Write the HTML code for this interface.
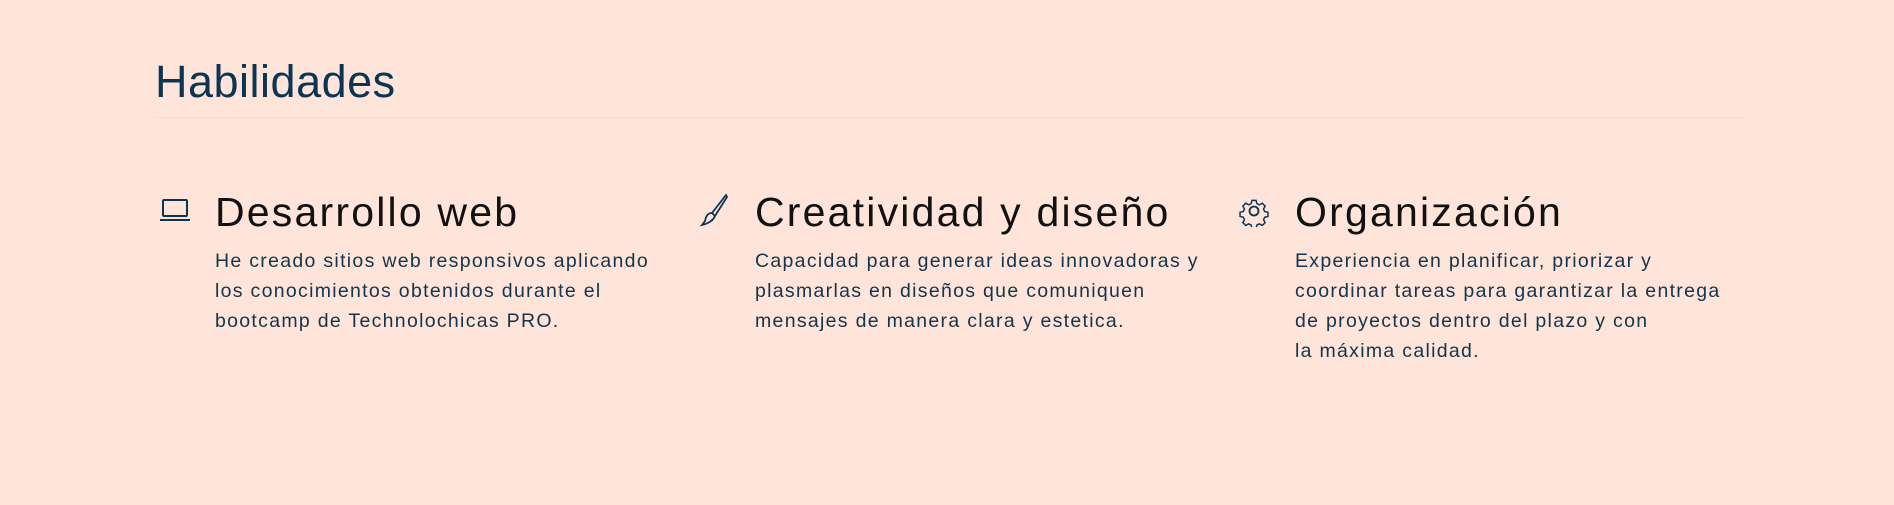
<!DOCTYPE html>
<html><head><meta charset="utf-8"><style>
body{margin:0;width:1894px;height:505px;background:#ffe4d9;font-family:"Liberation Sans",sans-serif;position:relative;overflow:hidden}
h2{position:absolute;left:155px;top:56px;margin:0;font-weight:400;font-size:45px;color:#0b3552;letter-spacing:0.5px}
.line{position:absolute;left:155px;top:117px;width:1590px;height:1px;background:#f2dcd4}
.col{position:absolute;top:187px}
.col h3{margin:0;font-weight:400;font-size:41px;color:#111;line-height:50px;letter-spacing:2.2px}
.col p{margin:9px 0 0;font-size:19.5px;line-height:30px;color:#14354c;letter-spacing:1.3px}
.ic{position:absolute;top:197px}
</style></head><body>
<h2>Habilidades</h2>
<div class="line"></div>
<svg class="ic" style="left:159px" width="32" height="26" viewBox="0 0 32 26" fill="none" stroke="#0b3552" stroke-width="2"><rect x="4" y="3" width="24" height="16" rx="1"/><path d="M1 23h30"/></svg>
<div class="col" style="left:215px"><h3>Desarrollo web</h3><p>He creado sitios web responsivos aplicando<br>los conocimientos obtenidos durante el<br>bootcamp de Technolochicas PRO.</p></div>
<svg class="ic" style="left:698px;top:193px" width="32" height="34" viewBox="0 0 32 34" fill="none" stroke="#0b3552" stroke-width="1.8"><path d="M28 2 L14 20 L17 23 L29 4 Z"/><path d="M14 20 C9 20 8 24 7 28 L4 32 C9 31 15 28 17 23"/></svg>
<div class="col" style="left:755px"><h3>Creatividad y diseño</h3><p>Capacidad para generar ideas innovadoras y<br>plasmarlas en diseños que comuniquen<br>mensajes de manera clara y estetica.</p></div>
<svg class="ic" style="left:1238px;top:195px" width="32" height="32" viewBox="0 0 32 32" fill="none" stroke="#0b3552" stroke-width="1.8"><circle cx="16" cy="16" r="4.5"/><path d="M13.5 3h5l1 4 3 1.5 3.6-2 3.5 3.5-2 3.6 1.4 3 4 1v5l-4 1-1.4 3 2 3.6-3.5 3.5-3.6-2-3 1.4-1 4h-5l-1-4-3-1.4-3.6 2-3.5-3.5 2-3.6-1.4-3-4-1v-5l4-1 1.4-3-2-3.6 3.5-3.5 3.6 2 3-1.5z" transform="translate(16 16) scale(0.82) translate(-16 -16)"/></svg>
<div class="col" style="left:1295px"><h3>Organización</h3><p>Experiencia en planificar, priorizar y<br>coordinar tareas para garantizar la entrega<br>de proyectos dentro del plazo y con<br>la máxima calidad.</p></div>
</body></html>
